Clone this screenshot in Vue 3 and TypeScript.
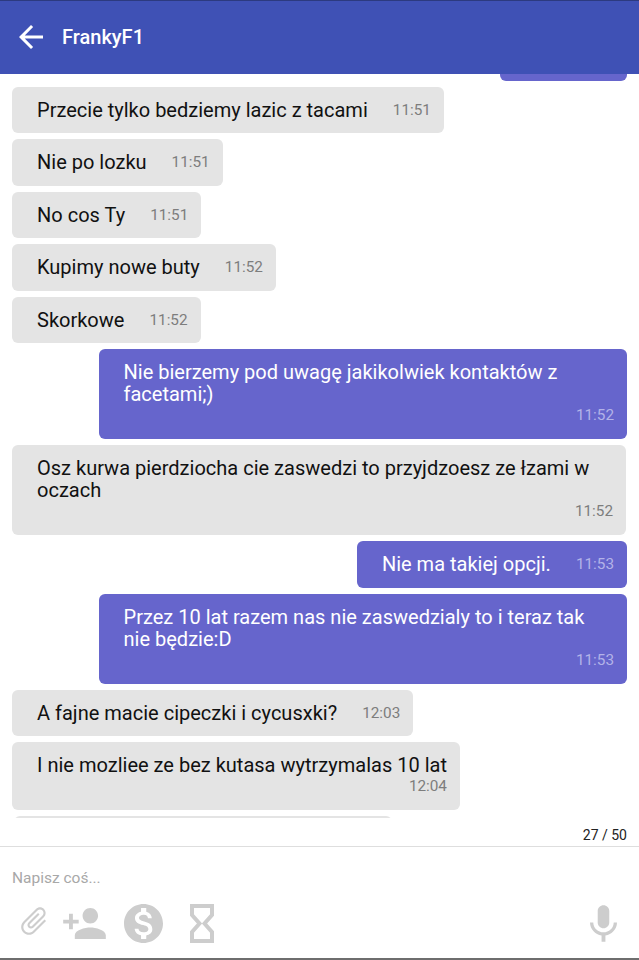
<script setup lang="ts">
interface Msg { text: string; time: string; mine?: boolean; stacked?: boolean }
const messages: Msg[] = [
  { text: 'Przecie tylko bedziemy lazic z tacami', time: '11:51' },
  { text: 'Nie po lozku', time: '11:51' },
  { text: 'No cos Ty', time: '11:51' },
  { text: 'Kupimy nowe buty', time: '11:52' },
  { text: 'Skorkowe', time: '11:52' },
  { text: 'Nie bierzemy pod uwagę jakikolwiek kontaktów z facetami;)', time: '11:52', mine: true, stacked: true },
  { text: 'Osz kurwa pierdziocha cie zaswedzi to przyjdzoesz ze łzami w oczach', time: '11:52', stacked: true },
  { text: 'Nie ma takiej opcji.', time: '11:53', mine: true },
  { text: 'Przez 10 lat razem nas nie zaswedzialy to i teraz tak nie będzie:D', time: '11:53', mine: true, stacked: true },
  { text: 'A fajne macie cipeczki i cycusxki?', time: '12:03' },
  { text: 'I nie mozliee ze bez kutasa wytrzymalas 10 lat', time: '12:04', stacked: true },
]
</script>

<template>
  <div class="screen">
    <header class="topbar">
      <svg class="back" viewBox="4 4 16 16" fill="#fff"><path d="M20 11H7.83l5.59-5.59L12 4l-8 8 8 8 1.41-1.41L7.83 13H20v-2z"/></svg>
      <span class="title">FrankyF1</span>
    </header>
    <main class="list">
      <div class="bubble mine clipped-top"></div>
      <div
        v-for="(m, i) in messages"
        :key="i"
        class="bubble"
        :class="{ mine: m.mine, stacked: m.stacked }"
      >
        <span class="text">{{ m.text }}</span>
        <span class="time">{{ m.time }}</span>
      </div>
      <div class="bubble next-peek"></div>
    </main>
    <div class="counter">27 / 50</div>
    <footer class="composer">
      <div class="placeholder">Napisz coś...</div>
      <div class="tools">
        <svg class="ic-attach" viewBox="0 0 24 24" fill="#cdcdcd"><path d="M16.5 6v11.5c0 2.21-1.79 4-4 4s-4-1.79-4-4V5c0-1.38 1.12-2.5 2.5-2.5s2.5 1.12 2.5 2.5v10.5c0 .55-.45 1-1 1s-1-.45-1-1V6H10v9.5c0 1.38 1.12 2.5 2.5 2.5s2.5-1.12 2.5-2.5V5c0-2.21-1.79-4-4-4S7 2.79 7 5v12.5c0 3.04 2.46 5.5 5.5 5.5s5.5-2.46 5.5-5.5V6h-1.5z"/></svg>
        <svg class="ic-person" viewBox="1 4 22 16" fill="#cdcdcd"><path d="M15 12c2.21 0 4-1.79 4-4s-1.79-4-4-4-4 1.79-4 4 1.79 4 4 4zm-9-2V7H4v3H1v2h3v3h2v-3h3v-2H6zm9 4c-2.67 0-8 1.34-8 4v2h16v-2c0-2.66-5.33-4-8-4z"/></svg>
        <svg class="ic-dollar" viewBox="2 2 20 20" fill="#cdcdcd"><path d="M12 2C6.48 2 2 6.48 2 12s4.48 10 10 10 10-4.48 10-10S17.52 2 12 2zm1.41 16.09V20h-2.67v-1.93c-1.71-.36-3.16-1.46-3.27-3.4h1.96c.1 1.05.82 1.87 2.65 1.87 1.96 0 2.4-.98 2.4-1.59 0-.83-.44-1.61-2.67-2.14-2.48-.6-4.18-1.62-4.18-3.67 0-1.72 1.39-2.84 3.11-3.21V4h2.67v1.95c1.86.45 2.79 1.86 2.85 3.39H14.3c-.05-1.11-.64-1.87-2.22-1.87-1.5 0-2.4.68-2.4 1.64 0 .84.65 1.39 2.67 1.91s4.18 1.39 4.18 3.91c-.01 1.83-1.38 2.83-3.12 3.16z"/></svg>
        <svg class="ic-hourglass" viewBox="0 0 24 39" fill="none" stroke="#cdcdcd" stroke-width="4"><path d="M2 2h20v9L14.5 19.5 22 28v9H2v-9l7.5-8.5L2 11z"/></svg>
        <svg class="ic-mic" viewBox="5 2 14 19" fill="#cdcdcd"><path d="M12 14c1.66 0 2.99-1.34 2.99-3L15 5c0-1.66-1.34-3-3-3S9 3.34 9 5v6c0 1.66 1.34 3 3 3zm5.3-3c0 3-2.54 5.1-5.3 5.1S6.7 14 6.7 11H5c0 3.41 2.72 6.23 6 6.72V21h2v-3.28c3.28-.48 6-3.3 6-6.72h-1.7z"/></svg>
      </div>
    </footer>
  </div>
</template>

<style scoped>
.screen {
  width: 639px;
  height: 960px;
  display: flex;
  flex-direction: column;
  background: #fff;
  font-family: Roboto, "Noto Sans", sans-serif;
  overflow: hidden;
  box-sizing: border-box;
  border-bottom: 2px solid #6e6e6e;
}
.topbar {
  flex: 0 0 74px;
  box-sizing: border-box;
  display: flex;
  align-items: center;
  gap: 19px;
  padding: 0 0 2px 19px;
  background: #3f51b5;
  border-top: 1px solid #2c3a80;
  position: relative;
  z-index: 1;
}
.back { width: 24px; height: 24px; }
.title {
  color: #fff;
  font-size: 20px;
  font-weight: 500;
}
.list {
  flex: 0 0 744px;
  overflow: hidden;
  display: flex;
  flex-direction: column;
  align-items: flex-start;
  gap: 6px;
  padding: 0 12px;
  box-sizing: border-box;
}
.bubble {
  display: flex;
  flex: none;
  align-items: center;
  box-sizing: border-box;
  min-height: 46.5px;
  padding: 12px 13px 12.5px 25px;
  border-radius: 6px;
  background: #e4e4e4;
  color: #111;
  font-size: 20.03px;
  line-height: 22px;
}
.bubble.mine {
  align-self: flex-end;
  background: #6665cc;
  color: #fff;
  padding-left: 24.5px;
}
.time {
  margin-left: 25px;
  font-size: 15.3px;
  color: #7d7d7d;
  white-space: nowrap;
}
.mine .time { color: #b3b3e8; }
.bubble.stacked {
  flex-direction: column;
  align-items: stretch;
  max-width: 614px;
}
.bubble.mine.stacked { width: 528px; }
.stacked .time {
  align-self: flex-end;
  margin-left: 0;
  line-height: 21.5px;
}
.clipped-top {
  width: 127px;
  margin-top: -40px;
}
.next-peek {
  width: 378px;
  margin-left: 2px;
}
.counter {
  flex: 0 0 29px;
  box-sizing: border-box;
  padding: 9px 12px 0 0;
  text-align: right;
  font-size: 14px;
  line-height: 16px;
  color: #222;
  border-bottom: 1px solid #dedede;
}
.composer {
  flex: 1;
  display: flex;
  flex-direction: column;
  padding: 0 12px;
}
.placeholder {
  padding-top: 23px;
  font-size: 15.5px;
  line-height: 17px;
  color: #a8a8a8;
}
.tools {
  display: flex;
  align-items: center;
  margin-top: 17px;
}
.ic-attach { width: 34px; height: 34px; transform: translateY(-3px) rotate(45deg); margin-left: 5px; }
.ic-person { width: 43px; height: 31px; margin-left: 12px; }
.ic-dollar { width: 39px; height: 39px; margin-left: 18px; }
.ic-hourglass { width: 24px; height: 39px; margin-left: 27px; }
.ic-mic { width: 27px; height: 37px; margin-left: auto; margin-right: 10px; }
</style>
